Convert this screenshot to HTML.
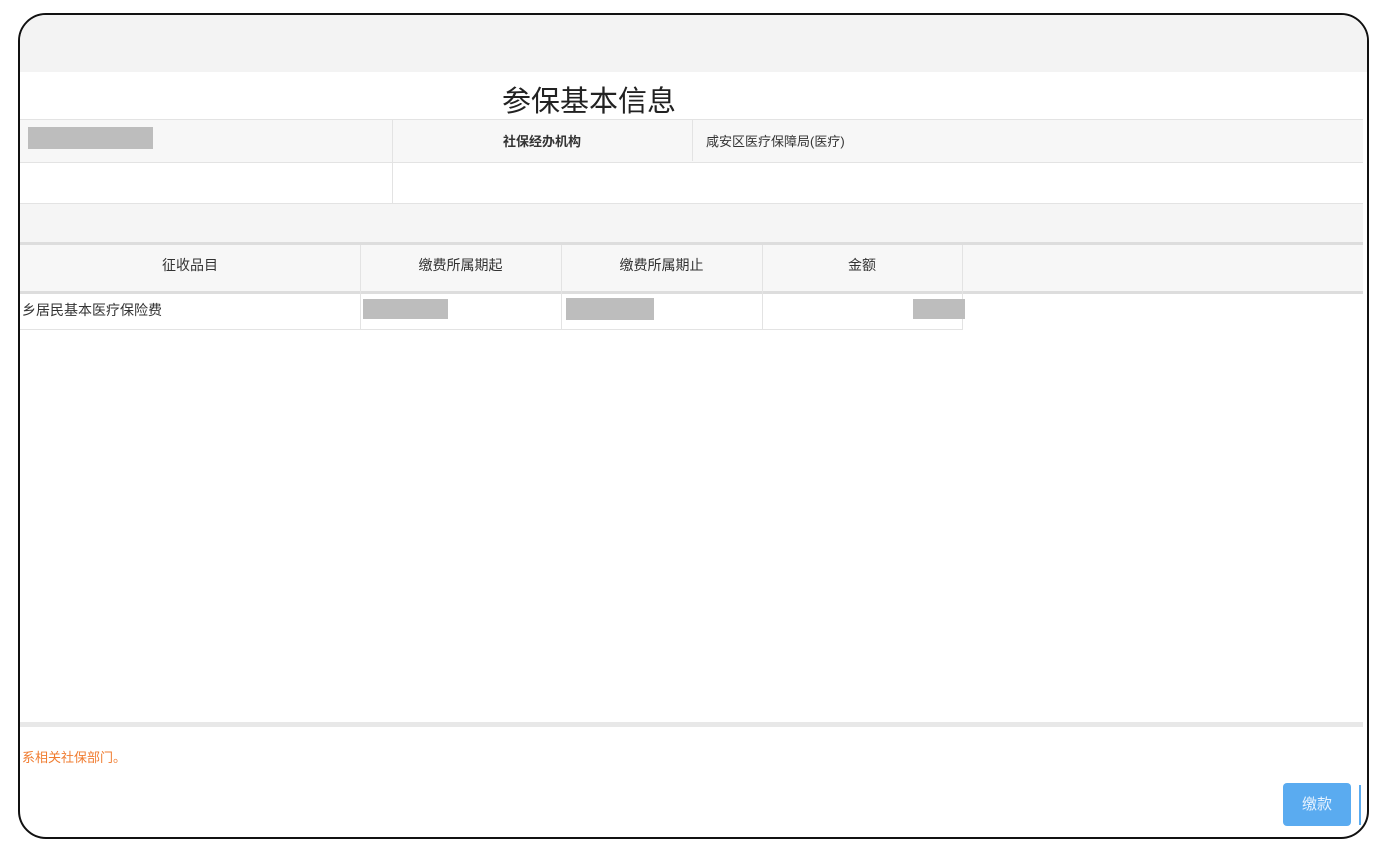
<!DOCTYPE html><html><head><meta charset="utf-8"><style>
body{margin:0;width:1387px;height:855px;background:#fff;position:relative;overflow:hidden;font-family:"Liberation Sans","Noto Sans CJK SC",sans-serif;}
.frame{position:absolute;left:18px;top:13px;width:1347px;height:822px;border:2px solid #111;border-radius:28px;overflow:hidden;background:#fff}
.a{position:absolute}
.t{font-size:13px;color:#333}
.g{background:#bdbdbd;position:absolute}
</style></head><body>
<div class="frame">
<div class="a" style="left:0;top:0;width:1347px;height:57px;background:#f3f3f3"></div>
<div class="a" style="left:482px;top:63px;font-size:29px;color:#222">参保基本信息</div>
<div class="a" style="left:0;top:104px;width:1343px;height:42px;background:#f7f7f7;border-top:1px solid #e3e3e3;border-bottom:1px solid #e3e3e3"></div>
<div class="g" style="left:8px;top:112px;width:125px;height:22px"></div>
<div class="a" style="left:372px;top:104px;width:1px;height:84px;background:#e3e3e3"></div>
<div class="a" style="left:672px;top:104px;width:1px;height:42px;background:#e3e3e3"></div>
<div class="a t" style="left:372px;top:116px;width:300px;text-align:center;font-weight:bold">社保经办机构</div>
<div class="a t" style="left:686px;top:116px">咸安区医疗保障局(医疗)</div>
<div class="a" style="left:0;top:188px;width:1343px;height:40px;background:#f5f5f5;border-top:1px solid #e3e3e3"></div>
<div class="a" style="left:0;top:227px;width:1343px;height:46px;background:#f7f7f7;border-top:3px solid #ddd;border-bottom:3px solid #ddd"></div>
<div class="a t" style="left:0;top:240px;width:340px;text-align:center;font-size:14px">征收品目</div>
<div class="a t" style="left:340px;top:240px;width:201px;text-align:center;font-size:14px">缴费所属期起</div>
<div class="a t" style="left:541px;top:240px;width:201px;text-align:center;font-size:14px">缴费所属期止</div>
<div class="a t" style="left:742px;top:240px;width:200px;text-align:center;font-size:14px">金额</div>
<div class="a" style="left:340px;top:230px;width:1px;height:85px;background:#e3e3e3"></div>
<div class="a" style="left:541px;top:230px;width:1px;height:85px;background:#e3e3e3"></div>
<div class="a" style="left:742px;top:230px;width:1px;height:85px;background:#e3e3e3"></div>
<div class="a" style="left:942px;top:230px;width:1px;height:85px;background:#e3e3e3"></div>
<div class="a" style="left:0;top:314px;width:942px;height:1px;background:#e3e3e3"></div>
<div class="a t" style="left:2px;top:285px;font-size:14px">乡居民基本医疗保险费</div>
<div class="g" style="left:343px;top:284px;width:85px;height:20px"></div>
<div class="g" style="left:546px;top:283px;width:88px;height:22px"></div>
<div class="g" style="left:893px;top:284px;width:52px;height:20px"></div>
<div class="a" style="left:0;top:707px;width:1343px;height:5px;background:#e8e8e8"></div>
<div class="a" style="left:2px;top:732px;font-size:13px;color:#f07c30">系相关社保部门。</div>
<div class="a" style="left:1263px;top:768px;width:68px;height:43px;background:#5aabf0;border-radius:4px;color:#e8f3ff;font-size:15px;text-align:center;line-height:43px">缴款</div>
<div class="a" style="left:1339px;top:770px;width:2px;height:40px;background:#5aabf0"></div>
</div>
</body></html>
